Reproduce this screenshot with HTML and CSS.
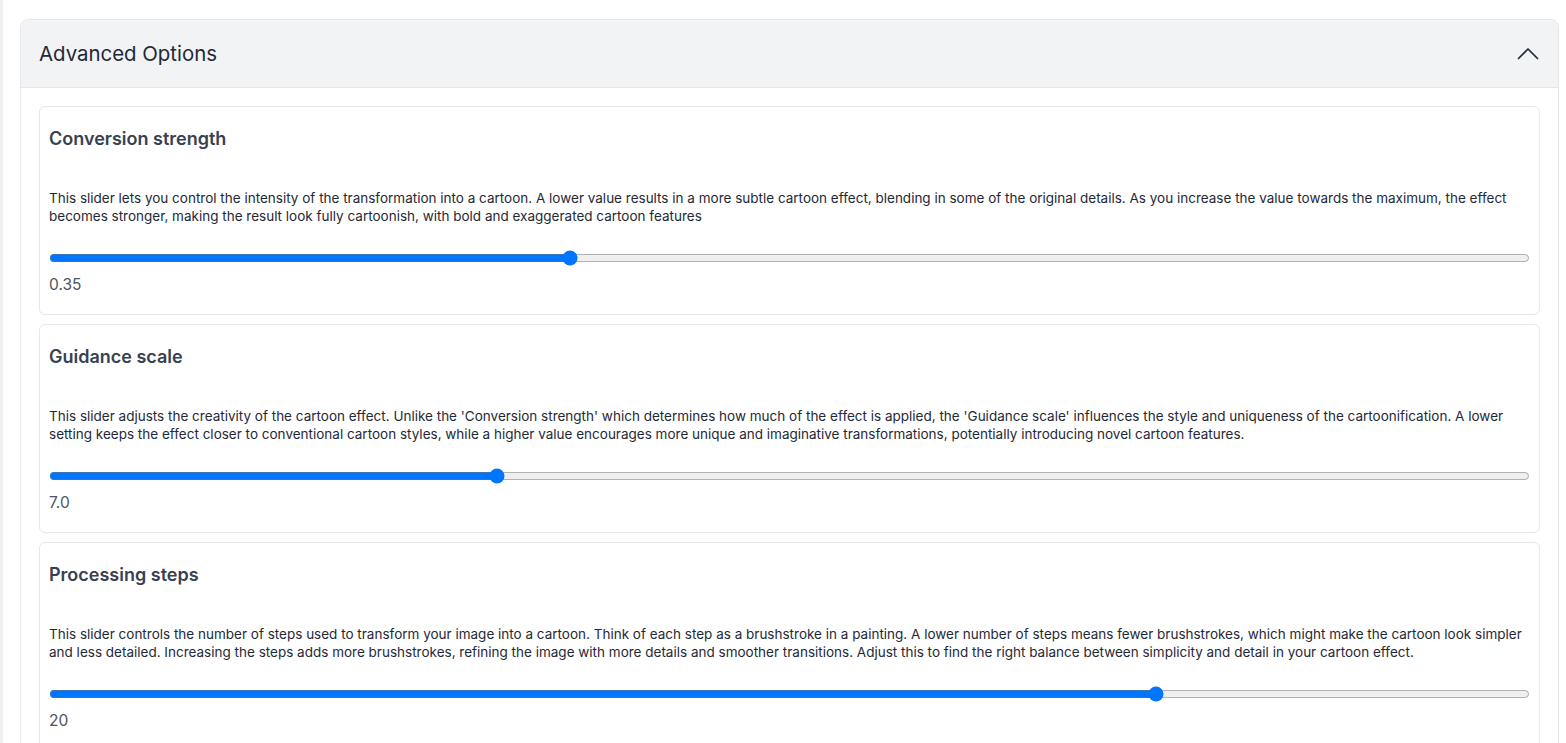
FILE: index.html
```html
<!DOCTYPE html>
<html lang="en">
  <head>
    <meta charset="UTF-8" />
    <meta name="viewport" content="width=device-width, initial-scale=1.0" />
    <title>Advanced Options</title>
    <link rel="stylesheet" href="styles.css">
  </head>
  <body>
    <div class="page">
      <section class="accordion">
        <div class="accordion-header">
          <h2 class="accordion-title">Advanced Options</h2>
          <svg class="chevron" width="24" height="24" viewBox="0 0 24 24" fill="none" stroke="currentColor" stroke-width="1.75" stroke-linecap="round" stroke-linejoin="round">
            <polyline points="2.5 16.5 12 7 21.5 16.5"></polyline>
          </svg>
        </div>

        <div class="accordion-body">
          <div class="option-card">
            <h3 class="option-title">Conversion strength</h3>
            <p class="option-desc">This slider lets you control the intensity of the transformation into a cartoon. A lower value results in a more subtle cartoon effect, blending in some of the original details. As you increase the value towards the maximum, the effect becomes stronger, making the result look fully cartoonish, with bold and exaggerated cartoon features</p>
            <input class="slider" type="range" min="0" max="1" step="0.05" value="0.35" />
            <div class="option-value">0.35</div>
          </div>

          <div class="option-card">
            <h3 class="option-title">Guidance scale</h3>
            <p class="option-desc">This slider adjusts the creativity of the cartoon effect. Unlike the 'Conversion strength' which determines how much of the effect is applied, the 'Guidance scale' influences the style and uniqueness of the cartoonification. A lower setting keeps the effect closer to conventional cartoon styles, while a higher value encourages more unique and imaginative transformations, potentially introducing novel cartoon features.</p>
            <input class="slider" type="range" min="1" max="21" step="0.5" value="7" />
            <div class="option-value">7.0</div>
          </div>

          <div class="option-card">
            <h3 class="option-title">Processing steps</h3>
            <p class="option-desc">This slider controls the number of steps used to transform your image into a cartoon. Think of each step as a brushstroke in a painting. A lower number of steps means fewer brushstrokes, which might make the cartoon look simpler and less detailed. Increasing the steps adds more brushstrokes, refining the image with more details and smoother transitions. Adjust this to find the right balance between simplicity and detail in your cartoon effect.</p>
            <input class="slider" type="range" min="5" max="25" step="1" value="20" />
            <div class="option-value">20</div>
          </div>
        </div>
      </section>
    </div>
  </body>
</html>
```

FILE: styles.css
```css
* {
  margin: 0;
  padding: 0;
  box-sizing: border-box;
}

body {
  font-family: "Inter", "Noto Sans", sans-serif;
  background: #ffffff;
  color: #1f2937;
  overflow: hidden;
}

.page {
  min-height: 100vh;
  border-left: 3px solid #eef0f2;
  padding: 19px 7px 0 17px;
}

.accordion {
  border: 1px solid #e5e7eb;
  border-radius: 8px;
  background: #ffffff;
}

.accordion-header {
  display: flex;
  align-items: center;
  justify-content: space-between;
  height: 68px;
  padding: 0 18px;
  background: #f2f3f5;
  border-bottom: 1px solid #e5e7eb;
  border-radius: 8px 8px 0 0;
}

.accordion-title {
  font-size: 20.4px;
  font-weight: 400;
  color: #1f2937;
}

.chevron {
  color: #1f2937;
}

.accordion-body {
  display: flex;
  flex-direction: column;
  gap: 9px;
  padding: 18px;
}

.option-card {
  border: 1px solid #e5e7eb;
  border-radius: 6px;
  padding: 10px 9px 19px;
}

.option-title {
  margin-top: 10px;
  font-size: 18px;
  line-height: 24px;
  font-weight: 600;
  color: #374151;
}

.option-desc {
  margin-top: 38px;
  font-size: 13.5px;
  line-height: 18px;
  color: #1f2937;
}

.slider {
  display: block;
  width: 100%;
  height: 16px;
  margin-top: 25px;
}

.option-value {
  margin-top: 9px;
  font-size: 15.5px;
  line-height: 20px;
  color: #4b5563;
}
```
